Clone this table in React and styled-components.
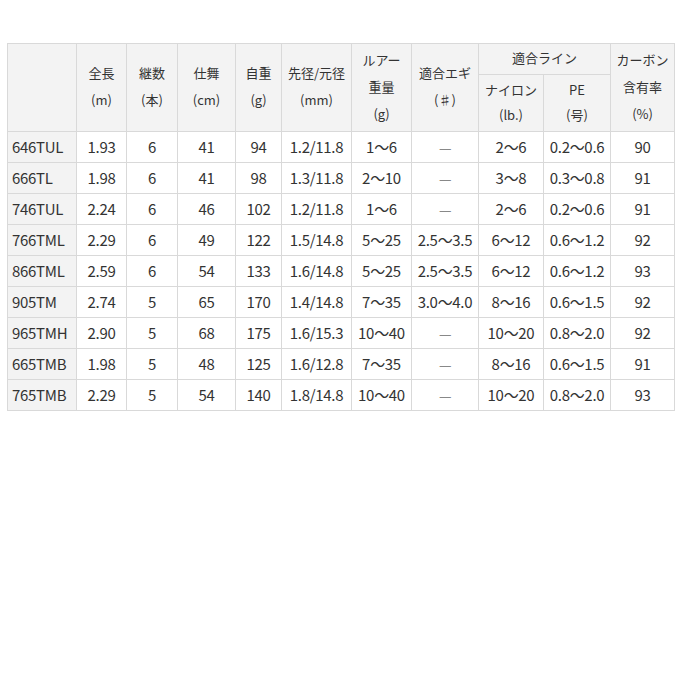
import React from 'react';
import styled, { createGlobalStyle } from 'styled-components';

const GlobalStyle = createGlobalStyle`
  body {
    margin: 0;
    background: #fff;
    font-family: "Noto Sans CJK JP", "Noto Sans", sans-serif;
    color: #333;
  }
`;

const rows = [
  ['646TUL', '1.93', '6', '41', '94', '1.2/11.8', '1〜6', '—', '2〜6', '0.2〜0.6', '90'],
  ['666TL', '1.98', '6', '41', '98', '1.3/11.8', '2〜10', '—', '3〜8', '0.3〜0.8', '91'],
  ['746TUL', '2.24', '6', '46', '102', '1.2/11.8', '1〜6', '—', '2〜6', '0.2〜0.6', '91'],
  ['766TML', '2.29', '6', '49', '122', '1.5/14.8', '5〜25', '2.5〜3.5', '6〜12', '0.6〜1.2', '92'],
  ['866TML', '2.59', '6', '54', '133', '1.6/14.8', '5〜25', '2.5〜3.5', '6〜12', '0.6〜1.2', '93'],
  ['905TM', '2.74', '5', '65', '170', '1.4/14.8', '7〜35', '3.0〜4.0', '8〜16', '0.6〜1.5', '92'],
  ['965TMH', '2.90', '5', '68', '175', '1.6/15.3', '10〜40', '—', '10〜20', '0.8〜2.0', '92'],
  ['665TMB', '1.98', '5', '48', '125', '1.6/12.8', '7〜35', '—', '8〜16', '0.6〜1.5', '91'],
  ['765TMB', '2.29', '5', '54', '140', '1.8/14.8', '10〜40', '—', '10〜20', '0.8〜2.0', '93'],
];

const widths = [69, 50, 51, 58, 46, 70, 60, 67, 65, 67, 64];

const Wrap = styled.div`
  padding: 43px 6px 0 7px;
`;

const Table = styled.table`
  border-collapse: collapse;
  table-layout: fixed;
  width: 667px;
  border: 1px solid #d9d9d9;
`;

const Th = styled.th`
  background: #f3f3f3;
  border: 1px solid #d9d9d9;
  font-weight: normal;
  font-size: 13px;
  line-height: ${p => p.$lh || 27}px;
  padding: 0 0 3px;
  text-align: center;
  vertical-align: middle;
  height: ${p => p.$h}px;
`;

const Td = styled.td`
  border: 1px solid #d9d9d9;
  font-size: 15px;
  height: 28px;
  padding: 0 ${p => (p.$head ? 4 : 0)}px 2px;
  text-align: ${p => (p.$head ? 'left' : 'center')};
  background: ${p => (p.$head ? '#f3f3f3' : '#fff')};
  white-space: nowrap;
  letter-spacing: -0.3px;
`;

const Dash = styled.span`
  color: #888;
  font-size: 14px;
`;

export default function App() {
  return (
    <>
      <GlobalStyle />
      <Wrap>
        <Table>
          <colgroup>
            {widths.map((w, i) => (
              <col key={i} style={{ width: w }} />
            ))}
          </colgroup>
          <thead>
            <tr>
              <Th rowSpan={2} $h={26} />
              <Th rowSpan={2}>全長<br />(m)</Th>
              <Th rowSpan={2}>継数<br />(本)</Th>
              <Th rowSpan={2}>仕舞<br />(cm)</Th>
              <Th rowSpan={2}>自重<br />(g)</Th>
              <Th rowSpan={2}>先径/元径<br />(mm)</Th>
              <Th rowSpan={2}>ルアー<br />重量<br />(g)</Th>
              <Th rowSpan={2}>適合エギ<br />(♯)</Th>
              <Th colSpan={2} $h={26}>適合ライン</Th>
              <Th rowSpan={2}>カーボン<br />含有率<br />(%)</Th>
            </tr>
            <tr>
              <Th $h={53} $lh={25}>ナイロン<br />(lb.)</Th>
              <Th $h={53} $lh={25}>PE<br />(号)</Th>
            </tr>
          </thead>
          <tbody>
            {rows.map(r => (
              <tr key={r[0]}>
                {r.map((c, i) => (
                  <Td key={i} $head={i === 0}>
                    {c === '—' ? <Dash>—</Dash> : c}
                  </Td>
                ))}
              </tr>
            ))}
          </tbody>
        </Table>
      </Wrap>
    </>
  );
}
